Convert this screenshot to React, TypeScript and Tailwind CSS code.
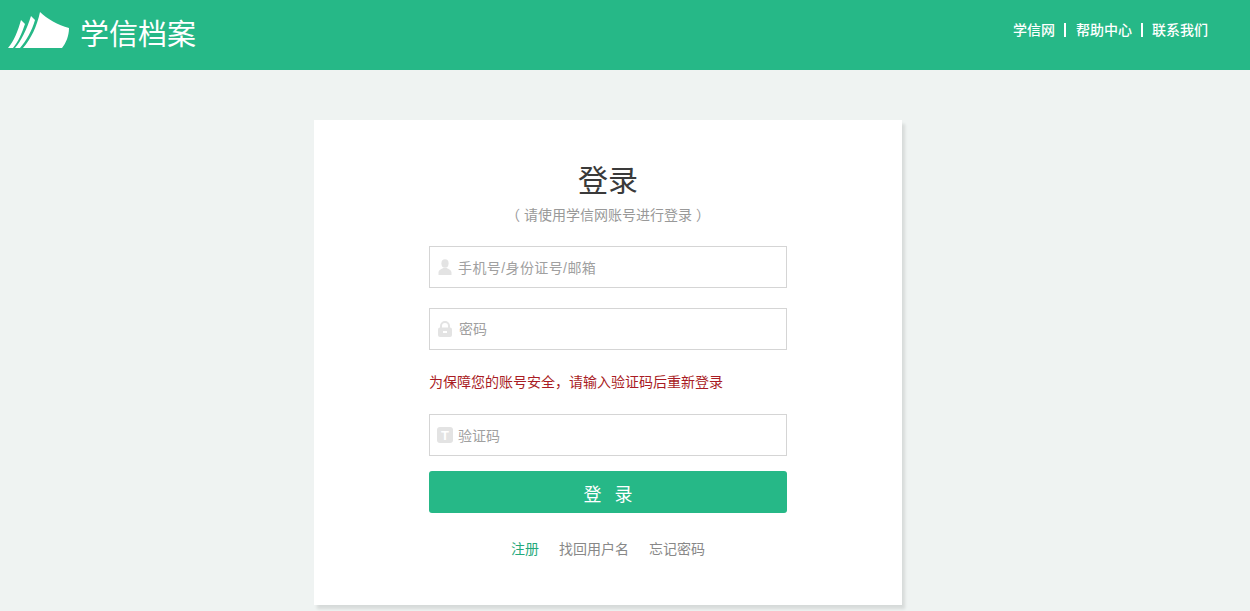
import type { ReactNode } from "react";

const FONT = "font-['Liberation_Sans','Noto_Sans_CJK_SC',sans-serif]";

function Logo() {
  return (
    <svg className="-mt-[9px]" width="61" height="37" viewBox="0 0 61 37" fill="#fff">
      <path d="M0 36 C6 29 10 19 13 8 L17 12 C14 21 10 30 5 36 Z" />
      <path d="M7 36 C13 29 19 17 23 4 L27 8 C24 19 18 29 12 36 Z" />
      <path d="M15 36 C23 27 29 14 32 0 C39 7 50 13 61 16 C61 24 58 31 54 36 Z" />
    </svg>
  );
}

function UserIcon() {
  return (
    <svg width="16" height="16" viewBox="0 0 16 16" fill="#e3e3e3">
      <ellipse cx="8" cy="4.5" rx="3.6" ry="4.2" />
      <path d="M1.5 16 V13.5 C1.5 11 4.5 10.2 6.2 9 H9.8 C11.5 10.2 14.5 11 14.5 13.5 V16 Z" />
    </svg>
  );
}

function LockIcon() {
  return (
    <svg width="16" height="16" viewBox="0 0 16 16">
      <path d="M4 7 V5 C4 2.6 5.8 1 8 1 C10.2 1 12 2.6 12 5 V7" fill="none" stroke="#e3e3e3" strokeWidth="2" />
      <rect x="1" y="6.5" width="14" height="9.5" rx="2" fill="#e3e3e3" />
      <rect x="6" y="10" width="4" height="2" fill="#fff" />
    </svg>
  );
}

function CaptchaIcon() {
  return (
    <span className="flex h-4 w-4 items-center justify-center rounded-[3px] bg-[#e3e3e3] text-[13px] font-bold leading-none text-white">
      T
    </span>
  );
}

function Field({ icon, label, textClass }: { icon: ReactNode; label: string; textClass: string }) {
  return (
    <div className="flex h-[42px] w-[358px] items-center border border-[#d5d5d5] bg-white pl-[7px]">
      <span className="flex w-4 shrink-0">{icon}</span>
      <span className={`${textClass} text-sm text-[#a0a0a0]`}>{label}</span>
    </div>
  );
}

export default function App() {
  return (
    <div className={`${FONT} h-[611px] overflow-hidden bg-[#eff3f2]`}>
      <header className="flex h-[70px] items-center justify-between bg-[#26b887] pl-2 pr-[42px]">
        <div className="flex items-center">
          <Logo />
          <span className="ml-[11px] text-[29px] font-normal leading-none text-white">学信档案</span>
        </div>
        <nav className="-mt-[10px] flex items-center text-sm font-medium text-white">
          <a>学信网</a>
          <span className="ml-[9px] mr-[10px] h-[14px] w-0.5 bg-white" />
          <a>帮助中心</a>
          <span className="mx-[9px] h-[14px] w-0.5 bg-white" />
          <a>联系我们</a>
        </nav>
      </header>

      <main className="ml-[314px] mt-[50px] flex h-[485px] w-[588px] flex-col items-center bg-white pt-[39px] shadow-[3px_4px_3px_rgba(0,0,0,0.1)]">
        <h1 className="h-[44px] text-[30px] leading-[44px] text-[#3a3a3a]">登录</h1>
        <p className="mt-[2px] h-[20px] text-sm leading-[20px] text-[#999]">（ 请使用学信网账号进行登录 ）</p>

        <div className="mt-[21px] flex w-[358px] flex-col">
          <Field icon={<UserIcon />} label="手机号/身份证号/邮箱" textClass="ml-[5px] mt-[2px] tracking-[0.4px]" />
          <div className="mt-5">
            <Field icon={<LockIcon />} label="密码" textClass="ml-[6px]" />
          </div>
          <p className="mt-[22px] h-5 text-sm leading-5 text-[#a91c24]">为保障您的账号安全，请输入验证码后重新登录</p>
          <div className="mt-[22px]">
            <Field icon={<CaptchaIcon />} label="验证码" textClass="ml-[5px] mt-[2px]" />
          </div>
          <button className="mt-[15px] h-[42px] rounded-[3px] bg-[#26b887] pl-1 pt-[5px] text-lg tracking-[4px] text-white">
            登 录
          </button>
          <div className="mt-[26px] flex justify-center gap-5 text-sm leading-5 text-[#888]">
            <a className="text-[#25a97c]">注册</a>
            <a>找回用户名</a>
            <a>忘记密码</a>
          </div>
        </div>
      </main>
    </div>
  );
}
